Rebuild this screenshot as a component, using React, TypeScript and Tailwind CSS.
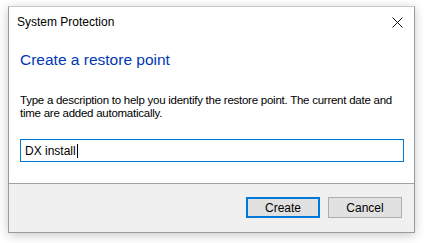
import React from 'react';

const font = { fontFamily: '"Liberation Sans", Arial, sans-serif' };

const CloseGlyph: React.FC = () => (
  <svg width="11" height="11" viewBox="0 0 11 11" className="block">
    <path d="M0.5 0.5 L10.5 10.5 M10.5 0.5 L0.5 10.5" stroke="#111" strokeWidth="1" fill="none" />
  </svg>
);

const App: React.FC = () => {
  const description = 'DX install';

  return (
    <div className="w-[425px] h-[243px] bg-white pt-[6px] pl-[8px]" style={font}>
      {/* Dialog window */}
      <div className="w-[407px] h-[227px] border border-[#9a9a9a] border-t-[#c8c8c8] bg-white flex flex-col shadow-[0_2px_10px_rgba(0,0,0,0.22)]">
        {/* Title bar */}
        <div className="h-[30px] flex items-center justify-between pl-[8px] pr-[11px]">
          <span className="text-[12px] text-black leading-none">System Protection</span>
          <button type="button" className="w-[12px] h-[12px] flex items-center justify-center">
            <CloseGlyph />
          </button>
        </div>

        {/* Body */}
        <div className="flex-1 px-[11px] pt-[13px]">
          <h1 className="text-[15.5px] leading-[20px] text-[#0037b8] font-normal">
            Create a restore point
          </h1>
          <p className="mt-[24px] text-[11.5px] leading-[13px] text-black tracking-[-0.25px] whitespace-nowrap">
            Type a description to help you identify the restore point. The current date and
            <br />
            time are added automatically.
          </p>
          {/* Text box (focused, caret after text) */}
          <div className="mt-[19px] w-[384px] h-[23px] border border-[#0078d7] pl-[4px] flex items-center">
            <span className="text-[12px] text-black">{description}</span>
            <span className="w-px h-[14px] bg-black ml-[1px]" />
          </div>
        </div>

        {/* Footer */}
        <div className="h-[49px] border-t border-[#a0a0a0] bg-[#f0f0f0] flex justify-end items-start pt-[13px] pr-[12px] gap-[8px]">
          <button
            type="button"
            className="w-[74px] h-[21px] border-2 border-[#0078d7] bg-[#e1e1e1] text-[12px] text-black leading-none"
          >
            Create
          </button>
          <button
            type="button"
            className="w-[74px] h-[21px] border border-[#adadad] bg-[#e1e1e1] text-[12px] text-black leading-none"
          >
            Cancel
          </button>
        </div>
      </div>
    </div>
  );
};

export default App;
